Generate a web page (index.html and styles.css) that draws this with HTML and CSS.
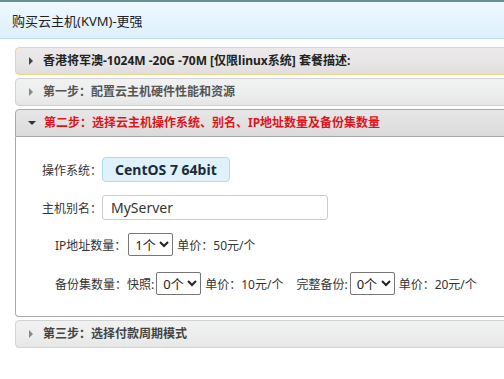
FILE: index.html
```html
<!DOCTYPE html>
<html lang="zh-CN">
<head>
    <meta charset="UTF-8">
    <meta name="viewport" content="width=device-width, initial-scale=1.0">
    <title>购买云主机(KVM)-更强</title>
    <link rel="stylesheet" href="styles.css">
</head>
<body>
    <div class="page-header">
        <h1>购买云主机(KVM)-更强</h1>
    </div>

    <div class="accordion">
        <div class="acc-item">
            <h3 class="acc-head plan"><span class="arrow"></span>香港将军澳-1024M -20G -70M [仅限linux系统] 套餐描述:</h3>
        </div>
        <div class="acc-item">
            <h3 class="acc-head step"><span class="arrow"></span>第一步：配置云主机硬件性能和资源</h3>
        </div>
        <div class="acc-item open">
            <h3 class="acc-head active"><span class="arrow down"></span>第二步：选择云主机操作系统、别名、IP地址数量及备份集数量</h3>
            <div class="acc-body">
                <div class="form-row">
                    <label>操作系统：</label>
                    <span class="os-box">CentOS 7 64bit</span>
                </div>
                <div class="form-row">
                    <label>主机别名：</label>
                    <input type="text" class="alias-input" value="MyServer">
                </div>
                <div class="form-row sub">
                    <label>IP地址数量：</label>
                    <select><option>1个</option><option>2个</option></select>
                    <span class="price">单价：50元/个</span>
                </div>
                <div class="form-row sub backup">
                    <label>备份集数量：快照:</label>
                    <select><option>0个</option><option>1个</option></select>
                    <span class="price">单价：10元/个</span>
                    <label class="gap">完整备份:</label>
                    <select><option>0个</option><option>1个</option></select>
                    <span class="price">单价：20元/个</span>
                </div>
            </div>
        </div>
        <div class="acc-item">
            <h3 class="acc-head step dark"><span class="arrow"></span>第三步：选择付款周期模式</h3>
        </div>
    </div>
</body>
</html>
```

FILE: styles.css
```css
body {
    margin: 0;
    font-family: "Noto Sans", "Noto Sans CJK SC", sans-serif;
    font-size: 12px;
    color: #333;
    background: #fff;
    overflow: hidden;
}

.page-header {
    height: 36px;
    border-top: 2px solid #6a8e98;
    border-bottom: 1px solid #bfe3ee;
    background: linear-gradient(#f0f8ff, #dcf0fc);
    padding: 0 12px;
}

.page-header h1 {
    margin: 0;
    font-size: 13px;
    font-weight: normal;
    line-height: 38px;
    color: #222;
}

/* accordion */
.accordion {
    width: 520px;
    margin: 8px 0 0 15px;
}

.acc-item {
    margin-bottom: 3px;
}

.acc-head {
    margin: 0;
    height: 26px;
    line-height: 26px;
    padding-left: 13px;
    font-size: 12px;
    font-weight: bold;
    border: 1px solid #d3d3d3;
    border-radius: 4px;
    background: linear-gradient(#f1f1f1 0%, #eceded 60%, #e6e6e6 100%);
    color: #555;
    display: flex;
    align-items: center;
}

.acc-head.plan {
    border-color: #f2d48a;
    background: linear-gradient(#ebe9e9 0%, #e6e4e4 60%, #dfdddd 100%);
    color: #222;
}

.acc-head.dark { color: #444; }

.acc-head.active {
    border-color: #aaa;
    border-radius: 4px 4px 0 0;
    background: linear-gradient(#e6e6e6 0%, #e0e0e0 60%, #d9d9d9 100%);
    color: #e0141a;
}

.arrow {
    width: 0;
    height: 0;
    border-top: 4px solid transparent;
    border-bottom: 4px solid transparent;
    border-left: 4px solid #888;
    margin-right: 10px;
}

.plan .arrow { border-left-color: #444; }

.arrow.down {
    border-left: 4px solid transparent;
    border-right: 4px solid transparent;
    border-top: 4px solid #333;
    border-bottom: none;
    margin-right: 8px;
    margin-left: -1px;
}

.acc-body {
    border: 1px solid #aaa;
    border-top: none;
    border-radius: 0 0 0 4px;
    background: #fff;
    padding: 20px 0 21px 26px;
    display: flex;
    flex-direction: column;
    gap: 13px;
}

.form-row {
    display: flex;
    align-items: center;
}

.form-row label {
    width: 60px;
    color: #333;
}

.form-row.sub {
    padding-left: 13px;
    gap: 2px;
}

.form-row.sub label { width: auto; }

.form-row.backup { margin-top: 3px; }

.form-row label.gap { margin-left: 11px; }

.os-box {
    display: inline-block;
    height: 23px;
    line-height: 23px;
    padding: 0 12px;
    background: #dff2fc;
    border: 1px solid #afdaef;
    border-radius: 4px;
    font-size: 14px;
    font-weight: bold;
    color: #1c2b3a;
}

.alias-input {
    width: 216px;
    height: 23px;
    padding: 0 0 0 8px;
    border: 1px solid #ccc;
    border-radius: 3px;
    font-family: inherit;
    font-size: 14px;
    color: #333;
    margin: 0;
}

select {
    height: 23px;
    font-family: inherit;
    font-size: 13px;
    color: #222;
    border: 1px solid #767676;
    border-radius: 2px;
    background: #fff;
    padding: 0 0 0 2px;
    margin: 0 2px 0 0;
}

.price { color: #333; }
```
